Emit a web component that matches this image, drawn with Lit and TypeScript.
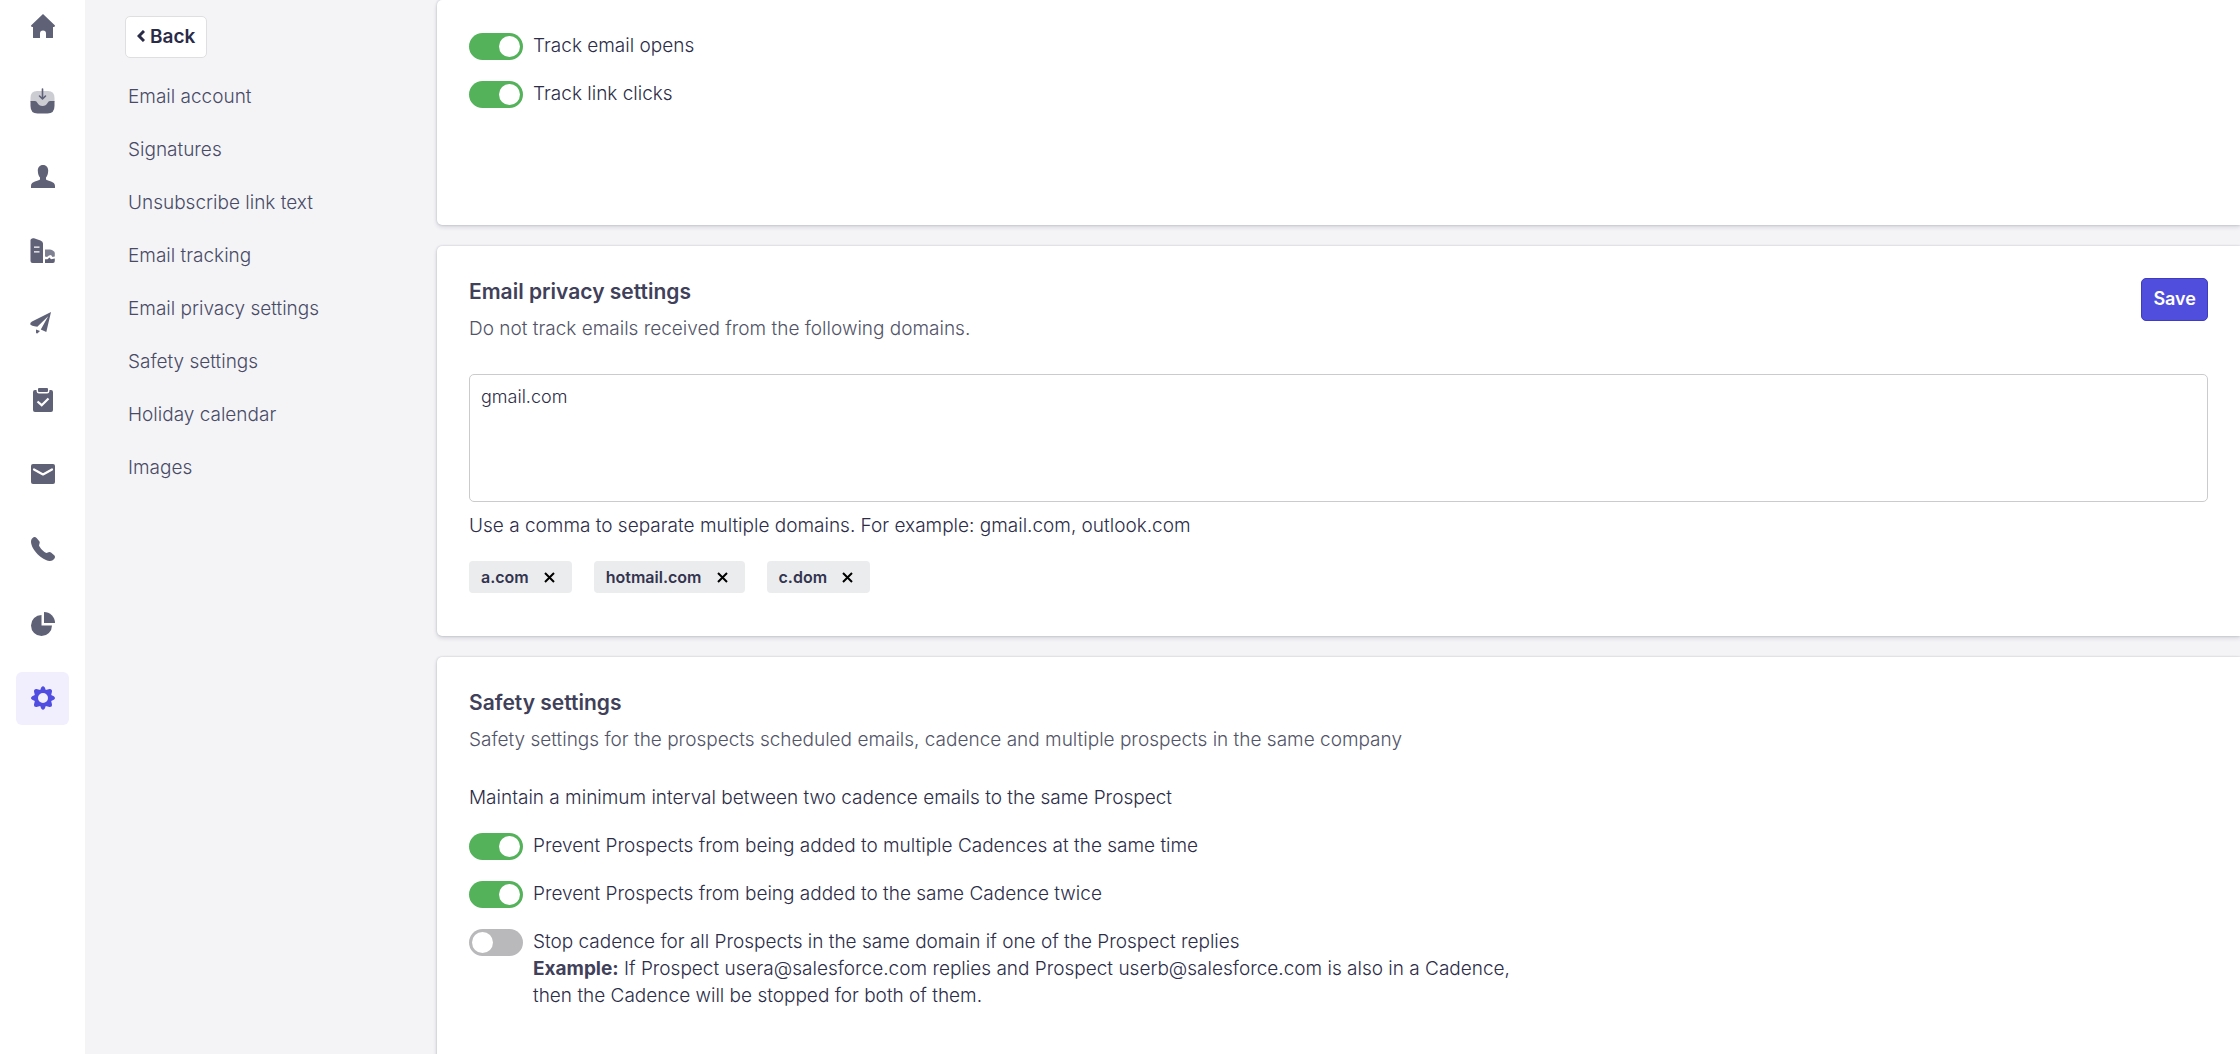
import { LitElement, html, css, svg, nothing } from "lit";
import { customElement, state } from "lit/decorators.js";

const icons = {
  home: svg`<path d="M17 7 L29 18.5 Q29 20 27.5 20 H27 V30.5 Q27 31 26.5 31 H20 V26.5 A3 3 0 0 0 14 26.5 V31 H7.500 Q7 31 7 30.500 V20 H6.500 Q5 20 5 18.500 Z"/>`,
  inbox: svg`<path opacity=".32" d="M11 9 H22 Q28.500 9 28.500 16 V20 H23 L20 24.500 H13 L10 20 H4.500 V16 Q4.500 9 11 9 Z"/>
    <path d="M4.500 19 H9 Q10.500 19 11.500 21 Q13 24 16.500 24 Q20 24 21.500 21 Q22.500 19 24 19 H28.500 V24 Q28.500 31.500 21.500 31.500 H11.500 Q4.500 31.500 4.500 24 Z"/>
    <path fill="none" stroke="currentColor" stroke-width="1.6" stroke-linecap="round" stroke-linejoin="round" d="M16.500 7 V16 M13.500 14 L16.500 17 L19.500 14"/>`,
  person: svg`<path d="M17 8 C20.500 8 22.200 10.500 22.200 13.500 C22.200 17 21 19.500 20 20.500 V22.500 C21.500 24 29 24 29 29 V31 H5 V29 C5 24 12.500 24 14 22.500 V20.500 C13 19.500 11.800 17 11.800 13.500 C11.800 10.500 13.500 8 17 8 Z"/>`,
  building: svg`<path fill-rule="evenodd" d="M6 6.500 Q6.500 6 8 6.300 L14.500 8.500 Q17 9.500 17 11.500 V31 H6.500 Q4.500 31 4.500 29 V8 Q4.500 7 6 6.500 Z M8 14.500 V15.800 H13.500 V14.500 Z M8 19.200 V20.500 H13.500 V19.200 Z"/>
    <path opacity=".8" d="M19 17.500 H24 Q28.500 18.500 28.800 21 V24.500 L26.500 25 L25 23 L23 23.500 L21 25 L19 24.500 Z"/>
    <path d="M19 27.200 H21.500 L23.500 25.500 L25 27.200 L28.800 26.500 V29 Q28.800 31 27 31 H19 Z"/>`,
  plane: svg`<path d="M25 5 L20.300 25 L14.800 22.500 L22.200 9.200 L11.300 19.800 Q5 18.800 4.200 17.200 Q4 15.500 6 14.500 Z"/><path d="M10 22.500 L14 24 L11.300 26.600 Q10 26.500 10 25.500 Z"/>`,
  clipboard: svg`<path d="M9 8 H10.500 Q10.500 11.500 13 11.500 H21 Q23.500 11.500 23.500 8 H25 Q27 8 27 10 V28 Q27 30 25 30 H9 Q7 30 7 28 V10 Q7 8 9 8 Z"/><path d="M13 6 H21 Q22 6 22 7 V9 Q22 10 21 10 H13 Q12 10 12 9 V7 Q12 6 13 6 Z"/>
    <path fill="none" stroke="#fff" stroke-width="2.200" d="M11.500 19.500 L15.700 23.200 L22.500 16.500"/>`,
  mail: svg`<rect x="5" y="7" width="24" height="20" rx="2"/><path fill="none" stroke="#fff" stroke-width="2.200" stroke-linejoin="round" stroke-linecap="round" d="M8 12.500 L17 17.500 L26 12.500"/>`,
  phone: svg`<path d="M8 5 Q9.500 4.700 10.800 6.300 L13.500 9.500 Q14 10.500 13.500 11.500 L13 13.500 C14 16 17.500 19.800 20.500 21 L22.500 20.200 Q24 19.700 25 20.500 L28.500 23.500 Q29.400 24.800 28.800 26 Q27 29.200 23.500 29 C16 28 5.500 18 5 10 Q4.800 6.500 8 5 Z"/>`,
  pie: svg`<path d="M15.500 8 V18.500 H26 A10.500 10.500 0 1 1 15.500 8 Z"/><path d="M18 5 A11 11 0 0 1 29 16 H18 Z"/>`,
  gear: svg`<path fill-rule="evenodd" d="M15.200 5.500 Q17 2.800 18.800 5.500 L19.800 8 L23.500 7 Q26.200 6.800 26 9.500 L25.200 13 L27.800 14.200 Q30.200 16 27.800 17.800 L25.200 19 L26 22.500 Q26.200 25.200 23.500 25 L19.800 24 L18.800 26.500 Q17 29.200 15.200 26.500 L14.200 24 L10.500 25 Q7.800 25.200 8 22.500 L8.800 19 L6.200 17.800 Q3.800 16 6.200 14.200 L8.800 13 L8 9.500 Q7.800 6.800 10.500 7 L14.200 8 Z M17 11 A5 5 0 1 0 17 21 A5 5 0 1 0 17 11 Z"/>`,
};

const railItems: { label: string; icon: keyof typeof icons; active?: boolean }[] = [
  { label: "Home", icon: "home" },
  { label: "Inbox", icon: "inbox" },
  { label: "People", icon: "person" },
  { label: "Accounts", icon: "building" },
  { label: "Cadences", icon: "plane" },
  { label: "Tasks", icon: "clipboard" },
  { label: "Emails", icon: "mail" },
  { label: "Calls", icon: "phone" },
  { label: "Reports", icon: "pie" },
  { label: "Settings", icon: "gear", active: true },
];

const sections = [
  "Email account",
  "Signatures",
  "Unsubscribe link text",
  "Email tracking",
  "Email privacy settings",
  "Safety settings",
  "Holiday calendar",
  "Images",
];

@customElement("app-root")
export class AppRoot extends LitElement {
  @state() private domains = ["a.com", "hotmail.com", "c.dom"];

  static styles = css`
    :host {
      display: block;
      height: 100vh;
      overflow: hidden;
      background: #f4f4f7;
      color: #2c2d48;
      font-family: Inter, "Liberation Sans", sans-serif;
      font-size: 19px;
      font-weight: 300;
      line-height: 27px;
    }
    * { box-sizing: border-box; }
    button, textarea { font: inherit; color: inherit; }
    h2, p, ul { margin: 0; padding: 0; }
    ul { list-style: none; }
    .shell { display: flex; min-height: 100%; align-items: stretch; }
    .rail { flex: none; width: 85px; background: #fff; }
    .rail-list { display: flex; flex-direction: column; align-items: center; gap: 22px; margin-top: -3px; }
    .tile {
      display: flex; align-items: center; justify-content: center;
      width: 53px; height: 53px; border-radius: 6px; color: #5f6177;
    }
    .tile.active { background: #f1effe; color: #504ee0; }
    .icon { width: 33px; height: 33px; fill: currentColor; }
    .side { flex: none; width: 352px; padding: 16px 40px; }
    .back {
      display: flex; align-items: center; gap: 5px; height: 42px; padding: 0 11px 2px;
      border: 1px solid #dfdfe2; border-radius: 5px; background: #fff;
      color: #2a2b47; font-weight: 600;
    }
    .chevron { width: 8px; height: 12px; fill: none; stroke: currentColor; stroke-width: 3; }
    .links { display: flex; flex-direction: column; gap: 26px; padding: 25px 3px; }
    .links a { color: #494b66; text-decoration: none; }
    .content { flex: 1; min-width: 0; display: flex; flex-direction: column; gap: 21px; }
    .card {
      padding: 33px 32px; background: #fff; border-radius: 5px 0 0 5px;
      box-shadow: 0 0 2px rgba(40, 42, 70, .25), 0 2px 4px rgba(40, 42, 70, .16);
    }
    .card.tracking { padding-bottom: 117px; }
    .card.privacy { padding: 32px 32px 43px; }
    .card.safety { flex: 1; padding: 32px 32px 80px; }
    .head { display: flex; align-items: flex-start; justify-content: space-between; gap: 24px; }
    h2 { color: #3f4059; font-size: 21px; line-height: 27px; font-weight: 600; }
    .desc { margin-top: 10px; color: #525468; }
    .save {
      height: 43px; padding: 0 11px 2px; border: 1px solid #3f3cbf; border-radius: 5px;
      background: #504edc; color: #fff; font-size: 18px; font-weight: 600;
    }
    .box {
      display: block; width: 100%; height: 128px; margin-top: 32px; padding: 8px 11px;
      border: 1px solid #cbcbce; border-radius: 5px; background: #fff; resize: none; outline: none;
      font-size: 18px;
    }
    .hint { margin-top: 10px; }
    .chips { display: flex; gap: 22px; margin-top: 22px; }
    .chip {
      display: flex; align-items: center; gap: 15px; height: 32px; padding: 0 17px 0 12px;
      border-radius: 4px; background: #ebecee; color: #33344f; font-size: 16px; font-weight: 600;
    }
    .remove { display: flex; padding: 0; border: 0; background: none; color: #000; }
    .cross { width: 11px; height: 11px; fill: none; stroke: currentColor; stroke-width: 2; }
    .toggles { display: flex; flex-direction: column; gap: 21px; }
    .lead { margin: 31px 0 22px; }
    .row { display: flex; align-items: flex-start; gap: 10px; }
    .switch {
      appearance: none; flex: none; display: flex; width: 54px; height: 27px; margin: 0; padding: 3px;
      border-radius: 14px; background: #b9b9bb;
    }
    .switch::before { content: ""; width: 21px; height: 21px; border-radius: 50%; background: #fff; }
    .switch:checked { justify-content: flex-end; background: #54b25b; }
    .row label { margin-top: -1px; }
    .note { display: block; }
    .note b { color: #3f4059; font-weight: 700; }
  `;

  private removeDomain(name: string) {
    this.domains = this.domains.filter((d) => d !== name);
  }

  private toggle(id: string, text: unknown, on: boolean) {
    return html`<div class="row">
      <input class="switch" type="checkbox" role="switch" id=${id} ?checked=${on} />
      <label for=${id}>${text}</label>
    </div>`;
  }

  render() {
    return html`<div class="shell">
      <nav class="rail" aria-label="Main">
        <ul class="rail-list">
          ${railItems.map(
            (item) => html`<li>
              <a class="tile ${item.active ? "active" : ""}" href="#" aria-label=${item.label}
                aria-current=${item.active ? "page" : nothing}>
                <svg class="icon" viewBox="0 0 33 33" aria-hidden="true">${icons[item.icon]}</svg>
              </a>
            </li>`,
          )}
        </ul>
      </nav>
      <aside class="side">
        <button class="back" type="button">
          <svg class="chevron" viewBox="0 0 8 12" aria-hidden="true"><path d="M7 1 L2 6 L7 11" /></svg>Back
        </button>
        <nav aria-label="Email settings">
          <ul class="links">
            ${sections.map((name) => html`<li><a href="#">${name}</a></li>`)}
          </ul>
        </nav>
      </aside>
      <main class="content">
        <section class="card tracking">
          <div class="toggles">
            ${this.toggle("opens", "Track email opens", true)}
            ${this.toggle("clicks", "Track link clicks", true)}
          </div>
        </section>
        <section class="card privacy">
          <div class="head">
            <div>
              <h2>Email privacy settings</h2>
              <p class="desc"><label for="domains">Do not track emails received from the following domains.</label></p>
            </div>
            <button class="save" type="button">Save</button>
          </div>
          <textarea class="box" id="domains" .value=${"gmail.com"}></textarea>
          <p class="hint">Use a comma to separate multiple domains. For example: gmail.com, outlook.com</p>
          <ul class="chips">
            ${this.domains.map(
              (name) => html`<li class="chip">${name}<button class="remove" type="button"
                aria-label="Remove ${name}" @click=${() => this.removeDomain(name)}>
                <svg class="cross" viewBox="0 0 11 11" aria-hidden="true"><path d="M1 1 L10 10 M10 1 L1 10" /></svg>
              </button></li>`,
            )}
          </ul>
        </section>
        <section class="card safety">
          <h2>Safety settings</h2>
          <p class="desc">Safety settings for the prospects scheduled emails, cadence and multiple prospects in the same company</p>
          <p class="lead">Maintain a minimum interval between two cadence emails to the same Prospect</p>
          <div class="toggles">
            ${this.toggle("multi", "Prevent Prospects from being added to multiple Cadences at the same time", true)}
            ${this.toggle("twice", "Prevent Prospects from being added to the same Cadence twice", true)}
            ${this.toggle(
              "stop",
              html`Stop cadence for all Prospects in the same domain if one of the Prospect replies
                <span class="note"><b>Example:</b> If Prospect usera@salesforce.com replies and Prospect userb@salesforce.com is also in a Cadence,<br />then the Cadence will be stopped for both of them.</span>`,
              false,
            )}
          </div>
        </section>
      </main>
    </div>`;
  }
}
